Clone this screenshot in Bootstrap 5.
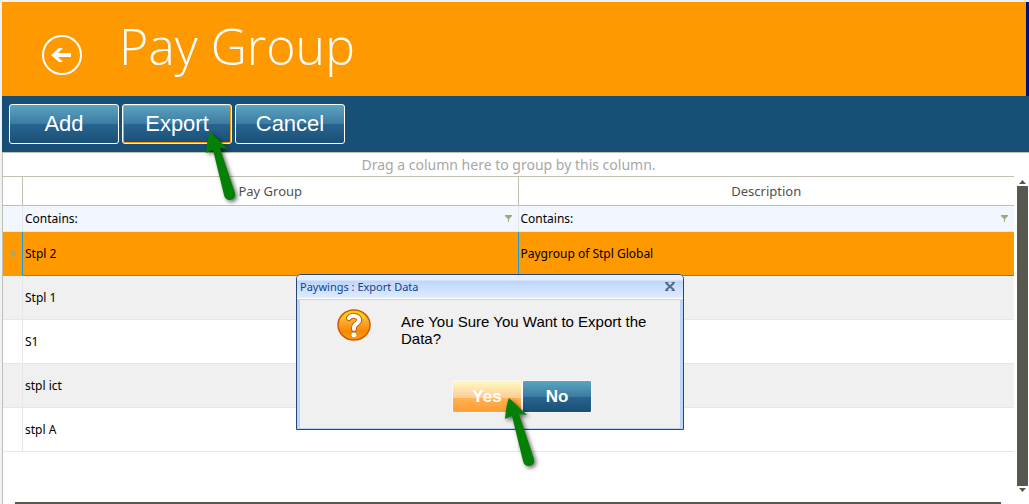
<!DOCTYPE html>
<html lang="en">
<head>
<meta charset="utf-8">
<meta name="viewport" content="width=device-width, initial-scale=1">
<title>Pay Group</title>
<link href="https://cdn.jsdelivr.net/npm/bootstrap@5.3.0/dist/css/bootstrap.min.css" rel="stylesheet">
<style>
  body { font-family: "Noto Sans", "Open Sans", sans-serif; font-size: 12px; line-height: 16px; color: #000; background: #edf1f8; overflow: hidden; }
  .app { height: 100vh; padding: 2px 0 0 2px; }
  .masthead { height: 94px; background: #ff9900; border-right: 3px solid #00107b; padding-left: 40px; gap: 37px; }
  .masthead h1 { font-family: "Open Sans", sans-serif; font-weight: 300; font-size: 50px; line-height: 68px; color: #fff; margin-top: 10px; }
  .back { margin-top: 33px; line-height: 0; }
  .toolbar { height: 56px; background: #184f76; padding: 8px 7px; gap: 3px; }
  .glossy { font-family: "Liberation Sans", Arial, sans-serif; color: #fff; border: 1px solid #fff; padding: 0;
    background: linear-gradient(#5ba4c3 0%, #3c7ba0 50%, #296592 50%, #194f76 100%); }
  .tool { width: 110px; height: 40px; font-size: 22px; line-height: 36px; border-radius: 3px; }
  .tool.current { box-shadow: inset 0 0 0 1px #ff9900; }
  .pointer { position: absolute; z-index: 5; pointer-events: none; filter: drop-shadow(2px 2px 2px rgba(0,0,0,.6)); }
  .tool-spot .pointer { left: 80px; top: 26px; }
  .yes-spot .pointer { left: 49px; top: 16px; }
  .workspace { background: #fff; border-left: 1px solid #c0c0b0; border-top: 1px solid #c0c0b0; min-height: 0; }
  .grouping { height: 24px; font-size: 14px; line-height: 24px; color: #a7a7a7; border-bottom: 1px solid #c0c0b0; margin-right: 15px; }
  .data { table-layout: fixed; border-collapse: separate; border-spacing: 0; width: 100%; }
  .data col.marker { width: 20px; }
  .data th { height: 29px; padding: 0; font-size: 13px; font-weight: 400; color: #505050; text-align: center; border-bottom: 1px solid #c0c0b0; border-right: 1px solid #c0c0b0; }
  .data td { height: 44px; padding: 0 2px; border-bottom: 1px solid #e6e6e6; border-right: 1px solid #e6e6e6; }
  .data th:last-child, .data td:last-child { border-right: 0; }
  .data .filters td { height: 26px; background: #f2f6ff; }
  .data .filters input { border: 0; background: transparent; min-width: 0; outline: 0; padding: 0; height: 16px; }
  .data .even td { background: #f0f0f0; }
  .data .chosen td { background: #ff9900; border-color: #1c9ade; }
  .data .chosen td:first-child { border-bottom-color: #ff9900; padding-left: 8px; }
  .vbar { width: 15px; padding: 3px 1px 10px 3px; }
  .vbar .thumb { width: 11px; background: #585850; margin: 2px 0; }
  .vbar button { line-height: 0; width: 11px; }
  .hbar { height: 2px; background: #585850; margin: 0 28px 0 12px; }
  .prompt { position: absolute; left: 293px; top: 121px; width: 388px; height: 156px; border: 1px solid #264778; border-radius: 5px 5px 0 0; background: #bad6fc; padding: 0 3px 3px; }
  .prompt-title { height: 24px; margin: 0 -3px; padding: 0 8px 0 3px; font-size: 11px; color: #15428b; background: linear-gradient(#e8f0fd 0, #e8f0fd 5px, #bed6fd 6px, #dfebff 23px); border-bottom: 1px solid #fff; border-radius: 4px 4px 0 0; }
  .prompt-body { height: 128px; background: #f0f0f0; margin-top: 1px; }
  .message { gap: 30px; padding: 9px 30px 0 37px; height: 80px; font: 15px/17px "Liberation Sans", Arial, sans-serif; }
  .message p { margin: 4px 0 0; }
  .answer { width: 70px; height: 33px; font-size: 17px; line-height: 28px; font-weight: 700; border-radius: 2px; border-color: #f8f8f8; }
  .warm { background: linear-gradient(#fffac0 0%, #fdcb98 54%, #ffb450 55%, #ff9b35 100%); }
</style>
</head>
<body>
<div class="app d-flex flex-column">
  <header class="masthead d-flex align-items-start">
    <a href="#" class="back" aria-label="Back">
      <svg width="40" height="40" viewBox="0 0 40 40" fill="none" stroke="#fff"><circle cx="20" cy="20" r="19" stroke-width="2"/><path d="M29 20H12" stroke-width="4"/><path d="M9 20l8-7h4l-7 7 7 7h-4z" fill="#fff" stroke="none"/></svg>
    </a>
    <h1 class="mb-0">Pay Group</h1>
  </header>
  <nav class="toolbar d-flex" aria-label="Actions">
    <button type="button" class="glossy tool">Add</button>
    <div class="tool-spot position-relative">
      <button type="button" class="glossy tool current">Export</button>
      <svg class="pointer" width="36" height="72" viewBox="0 0 36 72"><path d="M8 2L26 19 18 18 33 63Q34 69 28 70 23 70 22 65L11 20 4 23Q5 9 8 2Z" fill="#048004"/></svg>
    </div>
    <button type="button" class="glossy tool">Cancel</button>
  </nav>
  <main class="workspace flex-fill position-relative d-flex flex-column">
    <div class="grouping text-center">Drag a column here to group by this column.</div>
    <div class="d-flex flex-fill">
      <div class="flex-fill">
        <table class="data">
          <colgroup><col class="marker"><col><col></colgroup>
          <thead>
            <tr><th></th><th scope="col">Pay Group</th><th scope="col">Description</th></tr>
          </thead>
          <tbody>
            <tr class="filters">
              <td></td>
              <td><div class="d-flex align-items-center"><label for="fg">Contains:</label><input id="fg" class="flex-fill"><svg class="me-1" width="7" height="7" viewBox="0 0 7 7"><path d="M0 0h7v1L4 4v3H3V4L0 1z" fill="#9ca878"/></svg></div></td>
              <td><div class="d-flex align-items-center"><label for="fd">Contains:</label><input id="fd" class="flex-fill"><svg class="me-1" width="7" height="7" viewBox="0 0 7 7"><path d="M0 0h7v1L4 4v3H3V4L0 1z" fill="#9ca878"/></svg></div></td>
            </tr>
            <tr class="chosen"><td><svg class="d-block" width="6" height="9" viewBox="0 0 6 9"><path d="M0 0l6 4.500-6 4.500z" fill="#a8a86c"/></svg></td><td>Stpl 2</td><td>Paygroup of Stpl Global</td></tr>
            <tr class="even"><td></td><td>Stpl 1</td><td></td></tr>
            <tr><td></td><td>S1</td><td></td></tr>
            <tr class="even"><td></td><td>stpl ict</td><td></td></tr>
            <tr><td></td><td>stpl A</td><td></td></tr>
          </tbody>
        </table>
      </div>
      <div class="vbar d-flex flex-column">
        <button type="button" class="border-0 p-0 bg-transparent" aria-label="Scroll up"><svg width="7" height="4" viewBox="0 0 7 4"><path d="M0 4l3.500-4L7 4z" fill="#585850"/></svg></button>
        <div class="thumb flex-fill"></div>
        <button type="button" class="border-0 p-0 bg-transparent" aria-label="Scroll down"><svg width="7" height="4" viewBox="0 0 7 4"><path d="M0 0h7L3.500 4z" fill="#585850"/></svg></button>
      </div>
    </div>
    <div class="hbar"></div>

    <section class="prompt" role="dialog" aria-labelledby="prompt-title">
      <div class="prompt-title d-flex justify-content-between align-items-center">
        <span id="prompt-title">Paywings : Export Data</span>
        <button type="button" class="border-0 p-0 bg-transparent d-flex" aria-label="Close"><svg width="10" height="9" viewBox="0 0 10 9" fill="none"><path d="M1 1l8 7M9 1L1 8" stroke="#566986" stroke-width="2"/><path d="M0 .5h3.500M6.500.5H10M0 8.500h3.500M6.500 8.500H10" stroke="#566986"/></svg></button>
      </div>
      <div class="prompt-body">
        <div class="message d-flex align-items-start">
          <svg class="flex-shrink-0" width="34" height="32" viewBox="0 0 34 32">
            <defs><linearGradient id="amber" x1="0" y1="0" x2="0" y2="1"><stop offset="0" stop-color="#ffd800"/><stop offset=".4" stop-color="#f9a834"/><stop offset=".7" stop-color="#f88a00"/><stop offset="1" stop-color="#ff9d10"/></linearGradient></defs>
            <ellipse cx="17" cy="16" rx="16" ry="15" fill="url(#amber)" stroke="#d05a08" stroke-width="1.500"/>
            <path d="M4 12Q8 3 17 3T30 12Q24 7 17 7T4 12Z" fill="#ffe000" opacity=".6"/>
            <g fill="none" stroke-linecap="round"><path d="M12 9Q14 6 18 7 23 8 22 12 21 14 18 16 17 17 17 20" stroke="#c85a08" stroke-width="6"/><path d="M12 9Q14 6 18 7 23 8 22 12 21 14 18 16 17 17 17 20" stroke="#fff" stroke-width="4"/></g>
            <circle cx="17" cy="26" r="3" fill="#fff" stroke="#d06a10" stroke-width=".7"/>
          </svg>
          <p>Are You Sure You Want to Export the Data?</p>
        </div>
        <div class="d-flex justify-content-center ms-5 gap-0">
          <div class="yes-spot position-relative ms-3 me-0">
            <button type="button" class="glossy answer warm">Yes</button>
            <svg class="pointer" width="36" height="72" viewBox="0 0 36 72"><path d="M8 2L26 19 18 18 33 63Q34 69 28 70 23 70 22 65L11 20 4 23Q5 9 8 2Z" fill="#048004"/></svg>
          </div>
          <button type="button" class="glossy answer">No</button>
        </div>
      </div>
    </section>
  </main>
</div>
<script src="https://cdn.jsdelivr.net/npm/bootstrap@5.3.0/dist/js/bootstrap.bundle.min.js"></script>
</body>
</html>
